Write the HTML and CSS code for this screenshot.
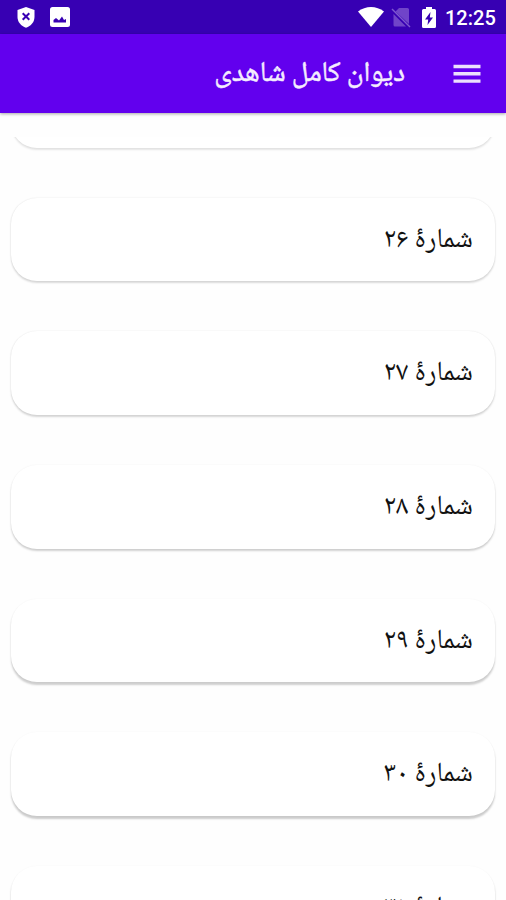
FILE: index.html
```html
<!DOCTYPE html>
<html lang="fa" dir="rtl">
<head>
<meta charset="utf-8">
<title>دیوان کامل شاهدی</title>
<link rel="stylesheet" href="styles.css">
</head>
<body>
<div class="statusbar" dir="ltr">
  <svg class="shield" width="20" height="22" viewBox="0 0 20 22"><path fill="#fff" d="M10 0 18.500 3v7c0 5-3.500 9-8.500 10.700C5 19 1.500 15 1.500 10V3z"/><path d="m6.700 6.200 6.600 6.600m0-6.600-6.600 6.600" stroke="#3700b3" stroke-width="2"/></svg>
  <svg class="photo" width="20" height="20" viewBox="0 0 20 20"><rect width="20" height="20" rx="2.500" fill="#fff"/><path fill="#3700b3" d="m3.500 15.500 0-2.500 2.500-2 3 2.500 3-4 2 3.500 2-1v3.500z"/></svg>
  <span class="space"></span>
  <svg class="wifi" width="26" height="20" viewBox="0 0 26 20"><path fill="#fff" d="M0 4.500C7.500-1.500 18.500-1.500 26 4.500L13 20z"/></svg>
  <svg class="sim" width="20" height="22" viewBox="0 0 20 22"><path fill="#7044c9" d="M8 1h8.500q1.500 0 1.500 1.500V17L4.500 4.500zM2.500 7 15 19.500H4q-1.500 0-1.500-1.500z"/><path d="m1 2 18 18" stroke="#7f58cf" stroke-width="1.500"/></svg>
  <svg class="battery" width="14" height="21" viewBox="0 0 14 21"><path fill="#fff" d="M4 0h6v2h2.500Q14 2 14 3.500v16q0 1.500-1.500 1.500h-11Q0 21 0 19.500v-16Q0 2 1.500 2H4z"/><path fill="#3700b3" d="M8.500 5 3 12.500h3.200L5.500 18 11 10.500H7.800z"/></svg>
  <span class="clock">12:25</span>
</div>
<header class="appbar">
  <svg class="menu" width="28" height="20" viewBox="0 0 28 20"><path d="M.5 2.500h27M.5 9.800h27M.5 17.100h27" stroke="#fff" stroke-opacity=".88" stroke-width="3.400"/></svg>
  <h1 class="title">دیوان کامل شاهدی</h1>
</header>
<main class="list">
  <div class="card l0"></div>
  <div class="card l1">شمارۀ ۲۶</div>
  <div class="card l2">شمارۀ ۲۷</div>
  <div class="card l3">شمارۀ ۲۸</div>
  <div class="card l4">شمارۀ ۲۹</div>
  <div class="card l5">شمارۀ ۳۰</div>
  <div class="card l6">شمارۀ ۳۱</div>
</main>
</body>
</html>
```
FILE: styles.css
```css
* { box-sizing: border-box; }
body {
  margin: 0;
  height: 900px;
  overflow: hidden;
  display: flex;
  flex-direction: column;
  background: #fefefe;
  color: #111;
  font-family: "Noto Naskh Arabic", "Noto Sans Arabic", "DejaVu Sans", sans-serif;
}
.statusbar {
  height: 34px;
  flex: none;
  display: flex;
  align-items: center;
  padding: 0 11px 0 16px;
  background: #3700b3;
}
.shield { margin-top: 2px; }
.photo { margin-left: 14px; }
.space { flex: 1; }
.sim { margin-left: 7px; margin-top: 2px; }
.battery { margin-left: 11px; }
.clock {
  margin-left: 9px;
  width: 50px;
  color: #fff;
  font: 500 20px/34px Roboto, sans-serif;
  padding-top: 2px;
  white-space: nowrap;
}
.appbar {
  height: 79px;
  flex: none;
  display: flex;
  align-items: center;
  padding: 0 25px;
  background: #6200ee;
  box-shadow: 0 1px 3px rgba(0, 0, 0, .35);
}
.title {
  margin: 0 48px 0 0;
  padding-top: 2px;
  color: #f5edff;
  font-size: 28.400px;
  font-weight: 400;
  line-height: 40px;
  -webkit-text-stroke: .5px #f5edff;
}
.list {
  flex: 1;
  min-height: 0;
  margin-top: 24px;
  padding: 0 11px;
  overflow: hidden;
}
.card {
  height: 83.700px;
  margin-bottom: 50px;
  padding: 2px 22px 0 0;
  display: flex;
  align-items: center;
  border-radius: 26px;
  background: #fff;
  font-size: 27.600px;
  line-height: 40px;
}
.l0 { margin-top: -73px; box-shadow: 0 1.500px 2px rgba(0, 0, 0, .1), 0 0 2px rgba(0, 0, 0, .06); }
.l1 { box-shadow: 0 1.500px 2px rgba(0, 0, 0, .14), 0 0 2px rgba(0, 0, 0, .08); }
.l2 { box-shadow: 0 1.800px 2px rgba(0, 0, 0, .16), 0 0 2px rgba(0, 0, 0, .06); }
.l3 { box-shadow: 0 2px 2px rgba(0, 0, 0, .18), 0 0 2px rgba(0, 0, 0, .05); }
.l4 { box-shadow: 0 2.200px 2px rgba(0, 0, 0, .19), 0 0 2px rgba(0, 0, 0, .04); }
.l5 { box-shadow: 0 2.400px 2px rgba(0, 0, 0, .2), 0 0 2px rgba(0, 0, 0, .03); }
.l6 { box-shadow: 0 2.500px 2px rgba(0, 0, 0, .2), 0 0 2px rgba(0, 0, 0, .03); }
```
